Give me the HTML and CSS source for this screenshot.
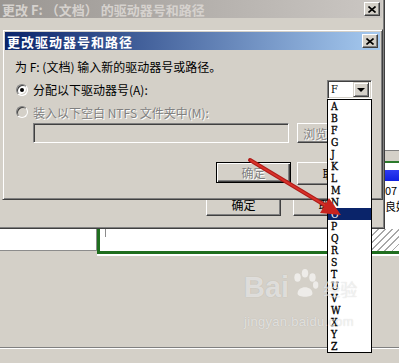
FILE: index.html
```html
<!DOCTYPE html>
<html lang="zh-CN">
  <head>
    <meta charset="UTF-8" />
    <title>更改驱动器号和路径</title>
    <link rel="stylesheet" href="styles.css">
  </head>
  <body>
    <div class="desk">
      <!-- disk management window behind the dialogs -->
      <div class="bg">
        <div class="bg-top"></div>
        <div class="bg-vol">
          <div class="vol-head"></div>
          <div class="vol-gap"></div>
          <div class="vol-sel"></div>
          <div class="vol-row">07</div>
          <div class="vol-row">良好</div>
        </div>
        <div class="bg-disks">
          <div class="disk-info"></div>
          <div class="disk-part">
            <span class="part-edge"></span>
            <span class="part-hatch"></span>
          </div>
        </div>
        <div class="bg-empty"></div>
        <div class="bg-status"></div>
      </div>

      <!-- outer dialog (inactive) -->
      <div class="win win-outer">
        <div class="title title-off">
          <span>更改 F: （文档） 的驱动器号和路径</span>
          <span class="close"><svg width="8" height="7" viewBox="0 0 8 7"><path d="M0.5 0.5 L7.5 6.5 M7.5 0.5 L0.5 6.5" stroke="#000" stroke-width="1.6"/></svg></span>
        </div>
        <div class="outer-body"></div>
        <div class="btn-row outer-btns">
          <button class="btn">确定</button>
          <button class="btn">取消</button>
        </div>
      </div>

      <!-- inner dialog (active) -->
      <div class="win win-inner">
        <div class="title title-on">
          <span>更改驱动器号和路径</span>
          <span class="close"><svg width="8" height="7" viewBox="0 0 8 7"><path d="M0.5 0.5 L7.5 6.5 M7.5 0.5 L0.5 6.5" stroke="#000" stroke-width="1.6"/></svg></span>
        </div>
        <div class="dlg-body">
          <p class="intro">为 F: (文档) 输入新的驱动器号或路径。</p>
          <div class="opt-row">
            <span class="opt"><span class="radio on"></span>分配以下驱动器号(A):</span>
            <div class="combo">
              <span class="combo-val">F</span>
              <span class="combo-btn"><span class="tri"></span></span>
            </div>
          </div>
          <div class="opt-row">
            <span class="opt dis"><span class="radio"></span>装入以下空白 NTFS 文件夹中(M):</span>
          </div>
          <div class="path-row">
            <div class="path-field"></div>
            <button class="btn btn-browse dis">浏览(R)...</button>
          </div>
          <div class="btn-row">
            <button class="btn default dis">确定</button>
            <button class="btn">取消</button>
          </div>
        </div>
      </div>

      <!-- open drive letter list -->
      <ul class="drop-list">
        <li>A</li><li>B</li><li>F</li><li>G</li><li>J</li><li>K</li><li>L</li>
        <li>M</li><li>N</li><li class="sel">O</li><li>P</li><li>Q</li><li>R</li>
        <li>S</li><li>T</li><li>U</li><li>V</li><li>W</li><li>X</li><li>Y</li><li>Z</li>
      </ul>

      <svg class="arrow" width="399" height="363" viewBox="0 0 399 363">
        <line x1="250" y1="160" x2="328" y2="207" stroke="#b01c18" stroke-width="4" stroke-linecap="round"/>
        <line x1="250" y1="160" x2="328" y2="207" stroke="#d8322a" stroke-width="2"/>
        <polygon points="341,215 320,213 329,198" fill="#c8241e"/>
      </svg>

      <div class="mark">
        <div class="mark-logo">
          <span class="mark-bai">Bai</span>
          <svg class="paw" width="32" height="32" viewBox="0 0 30 30">
            <ellipse cx="8" cy="9" rx="3" ry="4"/>
            <ellipse cx="15" cy="5" rx="3" ry="4"/>
            <ellipse cx="22" cy="9" rx="3" ry="4"/>
            <ellipse cx="25" cy="16" rx="2.5" ry="3.5"/>
            <path d="M8 24 C8 16 22 16 22 24 C22 28 8 28 8 24 Z"/>
          </svg>
          <span class="mark-jy">经验</span>
        </div>
        <div class="mark-url">jingyan.baidu.com</div>
      </div>
    </div>
  </body>
</html>
```

FILE: styles.css
```css
* {
  box-sizing: border-box;
}
body {
  margin: 0;
  background: #d4d0c8;
  font-family: "Noto Sans CJK SC", sans-serif;
  font-size: 12px;
  color: #000;
}
.desk {
  position: relative;
  width: 399px;
  height: 363px;
  overflow: hidden;
}

/* ---------- background window ---------- */
.bg {
  display: flex;
  flex-direction: column;
  height: 100%;
}
.bg-top {
  height: 150px;
  background: #fff;
}
.bg-vol {
  height: 79px;
  background: #fff;
  display: flex;
  flex-direction: column;
}
.vol-head {
  height: 13px;
  background: #d4d0c8;
  border-top: 1px solid #808080;
  border-bottom: 2px solid #2c7a2c;
}
.vol-gap {
  height: 7px;
}
.vol-sel {
  height: 11px;
  background: linear-gradient(to bottom, #2f3df2, #1020e0);
}
.vol-row {
  height: 14px;
  line-height: 14px;
  padding-left: 385px;
  margin-top: 2px;
  white-space: nowrap;
  font-size: 11px;
}
.vol-row:first-of-type {
  margin-top: 19px;
}
.bg-disks {
  height: 28px;
  display: flex;
}
.disk-info {
  width: 97px;
  height: 22px;
  background: #fff;
  border-bottom: 1px solid #8c8c8c;
  border-right: 1px solid #8c8c8c;
}
.disk-part {
  flex: 1;
  height: 25px;
  display: flex;
  background: #fff;
  border-left: 3px solid #1f6e1f;
  border-bottom: 3px solid #1f6e1f;
  box-shadow: 0 2px 0 #fff;
}
.part-edge {
  width: 6px;
  height: 8px;
  border-right: 1px solid #8c8c8c;
}
.part-hatch {
  margin-left: auto;
  width: 27px;
  background: repeating-linear-gradient(135deg, #fff 0 4px, #a8a8a8 4px 5px);
}
.bg-empty {
  flex: 1;
}
.bg-status {
  height: 16px;
  border-top: 1px solid #808080;
  box-shadow: inset 0 1px 0 #fff;
}

/* ---------- windows ---------- */
.win {
  position: absolute;
  display: flex;
  flex-direction: column;
  background: #d4d0c8;
  border: 1px solid;
  border-color: #d4d0c8 #404040 #404040 #d4d0c8;
  box-shadow: inset 1px 1px #fff, inset -1px -1px #808080;
  padding: 2px;
}
.win-outer {
  left: -3px;
  top: -3px;
  width: 388px;
  height: 232px;
}
.win-inner {
  left: 2px;
  top: 29px;
  width: 381px;
  height: 171px;
}
.title {
  height: 18px;
  flex: none;
  display: flex;
  align-items: center;
  justify-content: space-between;
  padding: 0 2px;
  font-size: 13px;
  font-weight: bold;
  color: #fff;
  background: linear-gradient(to right, #0a246a, #a6caf0);
  white-space: nowrap;
}
.title-on {
  letter-spacing: 1px;
}
.title-off {
  color: #d6d2ce;
  background: linear-gradient(to right, #9a9692, #cbc7c3);
}
.close {
  width: 16px;
  height: 14px;
  display: flex;
  align-items: center;
  justify-content: center;
  background: #d4d0c8;
  border: 1px solid;
  border-color: #fff #404040 #404040 #fff;
  box-shadow: inset -1px -1px #808080;
}
.outer-body {
  flex: 1;
}
.btn-row {
  display: flex;
  justify-content: flex-end;
  gap: 6px;
}
.outer-btns {
  gap: 12px;
  padding: 0 14px 10px 0;
}
.btn {
  width: 75px;
  height: 23px;
  padding: 0;
  font: inherit;
  color: #000;
  background: #d4d0c8;
  border: 1px solid;
  border-color: #fff #404040 #404040 #fff;
  box-shadow: inset -1px -1px #808080;
}
.btn.default {
  height: 21px;
  border: 1px solid #000;
  box-shadow: inset 1px 1px #fff, inset -1px -1px #404040, inset -2px -2px #808080;
}
.btn-browse {
  text-align: left;
  padding-left: 5px;
  white-space: nowrap;
}
.dis {
  color: #808080;
  text-shadow: 1px 1px 0 #fff;
}

/* ---------- dialog body ---------- */
.dlg-body {
  flex: 1;
  display: flex;
  flex-direction: column;
  padding: 9px 8px 12px 10px;
}
.intro {
  margin: 0;
  height: 16px;
  line-height: 16px;
  white-space: nowrap;
}
.opt-row {
  display: flex;
  align-items: center;
  justify-content: space-between;
  height: 19px;
  margin-top: 5px;
}
.opt-row + .opt-row {
  margin-top: 5px;
  height: 16px;
}
.opt {
  display: flex;
  align-items: center;
  gap: 5px;
  white-space: nowrap;
}
.radio {
  width: 12px;
  height: 12px;
  margin-left: 1px;
  border-radius: 50%;
  background: #fff;
  border: 1px solid;
  border-color: #808080 #fff #fff #808080;
  box-shadow: inset 1px 1px #404040, inset -1px -1px #d4d0c8;
  display: flex;
  align-items: center;
  justify-content: center;
}
.radio.on::after {
  content: "";
  width: 4px;
  height: 4px;
  border-radius: 50%;
  background: #000;
}
.opt.dis .radio {
  background: #d4d0c8;
}
.combo {
  width: 45px;
  height: 19px;
  display: flex;
  align-items: center;
  background: #fff;
  border: 1px solid;
  border-color: #808080 #fff #fff #808080;
  box-shadow: inset 1px 1px #404040, inset -1px -1px #d4d0c8;
  padding: 2px;
}
.combo-val {
  flex: 1;
  padding-left: 1px;
  font-family: "DejaVu Serif", serif;
  font-stretch: condensed;
  font-size: 11px;
}
.combo-btn {
  width: 16px;
  height: 15px;
  display: flex;
  align-items: center;
  justify-content: center;
  background: #d4d0c8;
  border: 1px solid;
  border-color: #d4d0c8 #404040 #404040 #d4d0c8;
  box-shadow: inset 1px 1px #fff, inset -1px -1px #808080;
}
.tri {
  width: 0;
  height: 0;
  border-left: 4px solid transparent;
  border-right: 4px solid transparent;
  border-top: 4px solid #000;
}
.path-row {
  display: flex;
  gap: 8px;
  margin-top: 3px;
  padding-left: 18px;
}
.path-field {
  width: 257px;
  height: 20px;
  border: 1px solid;
  border-color: #808080 #fff #fff #808080;
  box-shadow: inset 1px 1px #404040, inset -1px -1px #d4d0c8;
}
.path-row .btn {
  height: 20px;
}
.dlg-body .btn-row {
  margin-top: auto;
}

/* ---------- dropdown list ---------- */
.drop-list {
  position: absolute;
  left: 327px;
  top: 99px;
  width: 45px;
  margin: 0;
  padding: 0;
  list-style: none;
  background: #fff;
  border: 1px solid #000;
  font-family: "DejaVu Serif", serif;
  font-stretch: condensed;
  font-size: 10.3px;
  -webkit-text-stroke: 0.3px #000;
}
.drop-list li {
  height: 12px;
  line-height: 12px;
  padding-left: 3px;
}
.drop-list li.sel {
  background: #0a246a;
  color: #fff;
  -webkit-text-stroke: 0;
}

/* ---------- overlays ---------- */
.arrow {
  position: absolute;
  left: 0;
  top: 0;
  pointer-events: none;
}
.mark {
  position: absolute;
  left: 244px;
  top: 268px;
  color: rgba(255, 255, 255, 0.6);
  text-shadow: 0 0 1px rgba(0, 0, 0, 0.18);
  pointer-events: none;
}
.mark-logo {
  display: flex;
  align-items: flex-end;
}
.mark-bai {
  font-family: "Liberation Sans", sans-serif;
  font-weight: bold;
  font-size: 29px;
  line-height: 30px;
}
.paw {
  fill: rgba(255, 255, 255, 0.6);
  margin: 0 2px 2px 0;
}
.mark-jy {
  font-size: 17px;
  line-height: 26px;
}
.mark-url {
  margin-top: 12px;
  font-family: "Liberation Sans", sans-serif;
  font-size: 13px;
  letter-spacing: 0.3px;
}
```
